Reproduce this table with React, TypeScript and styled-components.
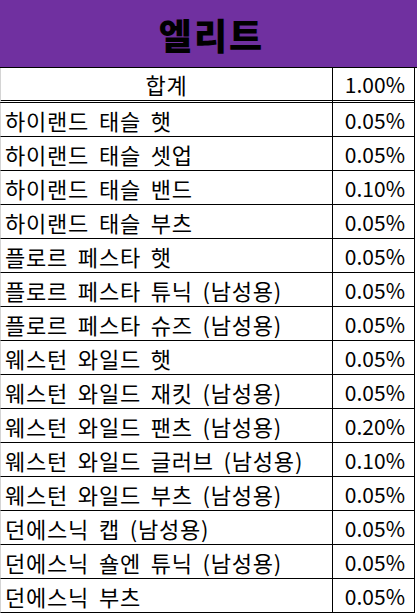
import { Fragment } from 'react';
import styled, { createGlobalStyle } from 'styled-components';

const GlobalStyle = createGlobalStyle`
  html, body {
    margin: 0;
    padding: 0;
    background: #ffffff;
  }
  body {
    font-family: 'Noto Sans CJK KR', 'Noto Sans', sans-serif;
    color: #000;
  }
`;

const items: [string, string][] = [
  ['하이랜드 태슬 햇', '0.05%'],
  ['하이랜드 태슬 셋업', '0.05%'],
  ['하이랜드 태슬 밴드', '0.10%'],
  ['하이랜드 태슬 부츠', '0.05%'],
  ['플로르 페스타 햇', '0.05%'],
  ['플로르 페스타 튜닉 (남성용)', '0.05%'],
  ['플로르 페스타 슈즈 (남성용)', '0.05%'],
  ['웨스턴 와일드 햇', '0.05%'],
  ['웨스턴 와일드 재킷 (남성용)', '0.05%'],
  ['웨스턴 와일드 팬츠 (남성용)', '0.20%'],
  ['웨스턴 와일드 글러브 (남성용)', '0.10%'],
  ['웨스턴 와일드 부츠 (남성용)', '0.05%'],
  ['던에스닉 캡 (남성용)', '0.05%'],
  ['던에스닉 숄엔 튜닉 (남성용)', '0.05%'],
  ['던에스닉 부츠', '0.05%'],
];

const Sheet = styled.div`
  width: 417px;
  height: 615px;
  overflow: hidden;
`;

const Title = styled.div`
  height: 67px;
  background: #7030a0;
  border-bottom: 1px solid #000;
  display: flex;
  align-items: center;
  justify-content: center;
  font-size: 36px;
  font-weight: 900;
  letter-spacing: 2px;
  padding-left: 6px;
`;

const Table = styled.div`
  width: 415px;
  display: grid;
  grid-template-columns: 333px 82px;
`;

const Cell = styled.div<{ $total?: boolean; $align: 'left' | 'center' | 'right'; $first?: boolean }>`
  height: ${({ $total }) => ($total ? '32px' : '33px')};
  display: flex;
  align-items: center;
  justify-content: ${({ $align }) =>
    $align === 'left' ? 'flex-start' : $align === 'right' ? 'flex-end' : 'center'};
  padding: ${({ $align }) => ($align === 'right' ? '0 9px 0 0' : $align === 'left' ? '0 0 0 4px' : '0')};
  border-bottom: ${({ $total }) => ($total ? '3px double #000' : '1px solid #000')};
  border-right: 1px solid #000;
  border-left: ${({ $first }) => ($first ? '1px solid #d4d4d4' : 'none')};
  font-size: ${({ $first }) => ($first ? '22px' : '21px')};
  letter-spacing: ${({ $first }) => ($first ? '0.8px' : '0')};
  word-spacing: ${({ $first }) => ($first ? '4px' : '0')};
  white-space: nowrap;
  box-sizing: content-box;
`;

export default function App() {
  return (
    <>
      <GlobalStyle />
      <Sheet>
        <Title>엘리트</Title>
        <Table>
          <Cell $total $first $align="center">
            합계
          </Cell>
          <Cell $total $align="right">
            1.00%
          </Cell>
          {items.map(([name, rate]) => (
            <Fragment key={name}>
              <Cell $first $align="left">
                {name}
              </Cell>
              <Cell $align="right">{rate}</Cell>
            </Fragment>
          ))}
        </Table>
      </Sheet>
    </>
  );
}
